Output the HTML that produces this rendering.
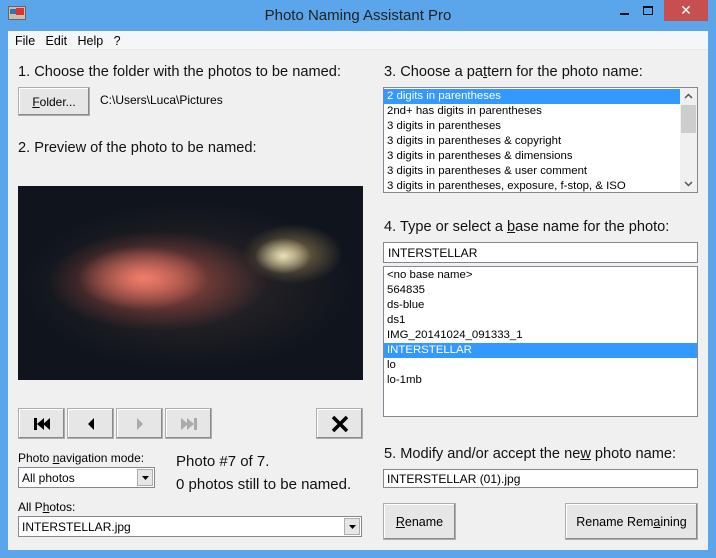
<!DOCTYPE html>
<html><head><meta charset="utf-8"><style>
*{margin:0;padding:0;box-sizing:border-box}
body{width:716px;height:558px;background:#5ba6ea;font-family:"Liberation Sans",sans-serif;position:relative;overflow:hidden;color:#000}
.a{position:absolute}
.h{font-size:14.6px;white-space:nowrap;color:#111}
.s{font-size:11px;white-space:nowrap}
.btn{position:absolute;background:#e6e6e6;border:1px solid #adadad;box-shadow:inset -1px -1px 0 #8a8a8a,inset 1px 1px 0 #fff;font-size:11.5px;display:flex;align-items:center;justify-content:center}
.box{position:absolute;background:#fff;border:1px solid #828790}
.li{height:15px;line-height:15px;font-size:11.4px;padding-left:3px;white-space:nowrap}
.sel{background:#3399ff;color:#fff}
.dd{position:absolute;right:1px;top:1px;bottom:1px;width:16px;background:#e6e6e6;border:1px solid #adadad;display:flex;align-items:center;justify-content:center}
</style></head><body>
<div class="a" style="left:8px;top:6px;width:18px;height:14px;background:#c8c0b0;border:1px solid #666"><div class="a" style="right:1px;top:1px;width:8px;height:7px;background:#d33"></div><div class="a" style="left:1px;top:2px;width:6px;height:5px;background:#3a6fb0"></div></div>
<div class="a" style="left:0;width:716px;top:7px;text-align:center;font-size:15px;color:#222">Photo Naming Assistant Pro</div>
<div class="a" style="left:620px;top:13px;width:9px;height:2px;background:#111"></div>
<div class="a" style="left:643px;top:6px;width:10px;height:9px;border:1px solid #111;border-top-width:2px"></div>
<div class="a" style="left:664px;top:0;width:44px;height:21px;background:#c74f50;color:#fff;font-size:14px;text-align:center;line-height:20px">✕</div>
<div class="a" style="left:8px;top:31px;width:700px;height:519px;background:#f0f0f0"></div>
<div class="a" style="left:8px;top:31px;width:700px;height:19px;background:#f5f6f7;border-bottom:1px solid #e8e8e8"></div>
<div class="a s" style="left:15px;top:34px;font-size:12.5px">File&nbsp;&nbsp;&nbsp;Edit&nbsp;&nbsp;&nbsp;Help&nbsp;&nbsp;&nbsp;?</div>

<div class="a h" style="left:18px;top:64px">1. Choose the folder with the photos to be named:</div>
<div class="btn" style="left:18px;top:87px;width:72px;height:29px;font-size:12px"><u>F</u>older...</div>
<div class="a s" style="left:100px;top:93px;font-size:12px">C:\Users\Luca\Pictures</div>
<div class="a h" style="left:18px;top:140px">2. Preview of the photo to be named:</div>
<div class="a" style="left:18px;top:186px;width:345px;height:194px;overflow:hidden;background:
radial-gradient(ellipse 28px 18px at 265px 70px,rgba(250,240,200,.9),rgba(0,0,0,0)),
radial-gradient(ellipse 50px 30px at 275px 68px,rgba(200,170,100,.6),rgba(0,0,0,0)),
radial-gradient(ellipse 65px 32px at 125px 92px,rgba(245,130,110,.95),rgba(0,0,0,0)),
radial-gradient(ellipse 110px 50px at 140px 95px,rgba(190,80,70,.8),rgba(0,0,0,0)),
radial-gradient(ellipse 170px 85px at 170px 100px,rgba(70,55,50,.6),rgba(0,0,0,0)),
#0f141d"></div>
<div class="btn" style="left:18px;top:408px;width:47px;height:31px"><svg width="20" height="14"><rect x="2" y="1" width="3" height="12"/><path d="M5 7L12 1V13Z M11 7L18 1V13Z"/></svg></div>
<div class="btn" style="left:67px;top:408px;width:47px;height:31px"><svg width="10" height="14"><path d="M2 7L8 1V13Z"/></svg></div>
<div class="btn" style="left:116px;top:408px;width:47px;height:31px"><svg width="10" height="14"><path d="M2 1L8 7L2 13Z" fill="#aaa"/></svg></div>
<div class="btn" style="left:165px;top:408px;width:47px;height:31px"><svg width="20" height="14" fill="#aaa"><path d="M2 1L9 7L2 13Z M8 1L15 7L8 13Z"/><rect x="15" y="1" width="3" height="12"/></svg></div>
<div class="btn" style="left:316px;top:408px;width:47px;height:31px"><svg width="18" height="18"><path d="M2 2L16 16M16 2L2 16" stroke="#000" stroke-width="3.5"/></svg></div>
<div class="a s" style="left:18px;top:451px;font-size:12px">Photo <u>n</u>avigation mode:</div>
<div class="box" style="left:18px;top:467px;width:137px;height:21px"><div class="s" style="padding:3px 3px;font-size:12px">All photos</div><div class="dd"><svg width="7" height="4"><path d="M0 0H7L3.5 4Z"/></svg></div></div>
<div class="a h" style="left:176px;top:453px;font-size:15px">Photo #7 of 7.</div>
<div class="a h" style="left:176px;top:476px;font-size:15px">0 photos still to be named.</div>
<div class="a s" style="left:18px;top:500px;font-size:12px">All P<u>h</u>otos:</div>
<div class="box" style="left:18px;top:516px;width:344px;height:21px"><div class="s" style="padding:3px 3px;font-size:12px">INTERSTELLAR.jpg</div><div class="dd"><svg width="7" height="4"><path d="M0 0H7L3.5 4Z"/></svg></div></div>

<div class="a h" style="left:384px;top:64px">3. Choose a pa<u>t</u>tern for the photo name:</div>
<div class="box" style="left:383px;top:87px;width:315px;height:106px;padding-top:1px">
<div class="li sel" style="width:296px">2 digits in parentheses</div>
<div class="li">2nd+ has digits in parentheses</div>
<div class="li">3 digits in parentheses</div>
<div class="li">3 digits in parentheses &amp; copyright</div>
<div class="li">3 digits in parentheses &amp; dimensions</div>
<div class="li">3 digits in parentheses &amp; user comment</div>
<div class="li">3 digits in parentheses, exposure, f-stop, &amp; ISO</div>
<div class="a" style="right:0;top:0;width:17px;height:104px;background:#f0f0f0"><div class="a" style="left:1px;top:17px;width:15px;height:28px;background:#cdcdcd"></div><svg class="a" style="left:4px;top:5px" width="9" height="6"><path d="M1 5L4.5 1.5L8 5" stroke="#555" fill="none" stroke-width="1.5"/></svg><svg class="a" style="left:4px;top:93px" width="9" height="6"><path d="M1 1L4.5 4.5L8 1" stroke="#555" fill="none" stroke-width="1.5"/></svg></div>
</div>
<div class="a h" style="left:384px;top:219px">4. Type or select a <u>b</u>ase name for the photo:</div>
<div class="box" style="left:383px;top:242px;width:315px;height:21px"><div class="s" style="padding:3px 4px;font-size:12px">INTERSTELLAR</div></div>
<div class="box" style="left:383px;top:266px;width:315px;height:151px;padding-top:1px">
<div class="li">&lt;no base name&gt;</div>
<div class="li">564835</div>
<div class="li">ds-blue</div>
<div class="li">ds1</div>
<div class="li">IMG_20141024_091333_1</div>
<div class="li sel">INTERSTELLAR</div>
<div class="li">lo</div>
<div class="li">lo-1mb</div>
</div>
<div class="a h" style="left:384px;top:446px">5. Modify and/or accept the ne<u>w</u> photo name:</div>
<div class="box" style="left:383px;top:469px;width:315px;height:19px"><div class="s" style="padding:2px 3px;font-size:12px">INTERSTELLAR (01).jpg</div></div>
<div class="btn" style="left:383px;top:503px;width:73px;height:37px;font-size:12.5px"><u>R</u>ename</div>
<div class="btn" style="left:565px;top:503px;width:133px;height:37px;font-size:12.5px">Rename Rem<u>a</u>ining</div>
</body></html>
